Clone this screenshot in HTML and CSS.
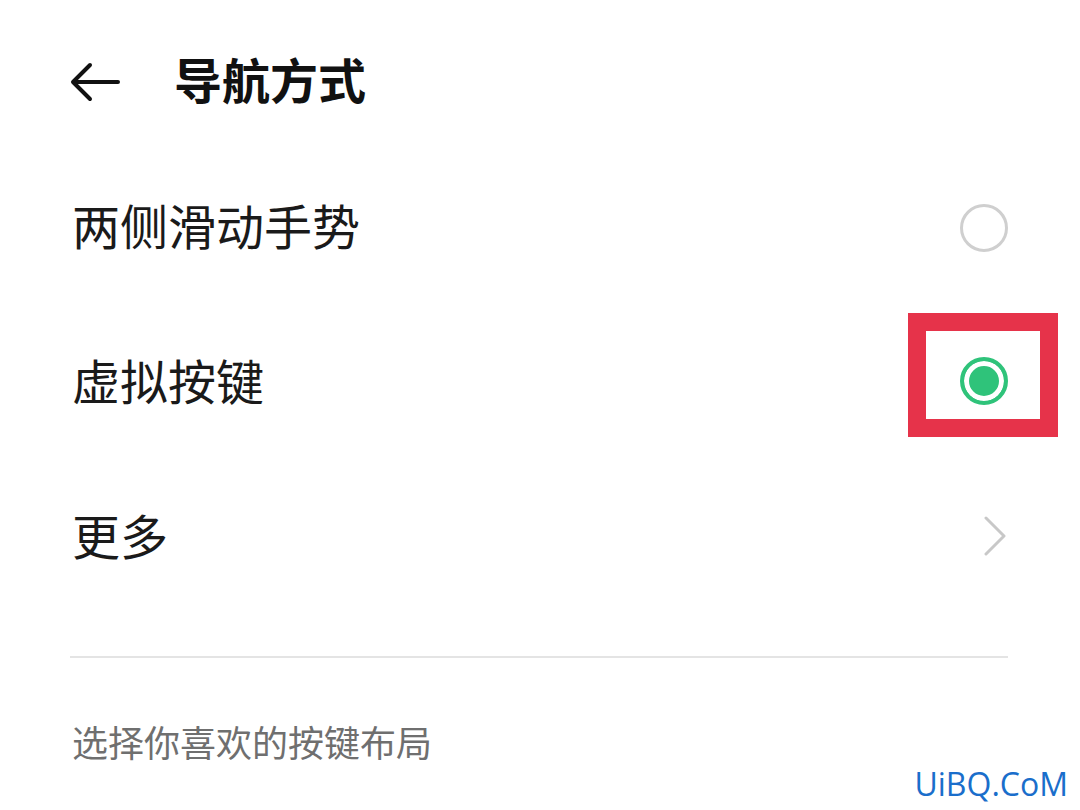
FILE: index.html
```html
<!DOCTYPE html>
<html lang="zh-CN">
<head>
    <meta charset="UTF-8">
    <meta name="viewport" content="width=device-width, initial-scale=1.0">
    <title>导航方式</title>
    <link rel="stylesheet" href="styles.css">
</head>
<body>

    <div class="page">
        <div class="header">
            <svg class="back" width="50" height="40" viewBox="0 0 50 40">
                <path d="M48 20 H4 M20 3 L3 20 L20 37" fill="none" stroke="#111" stroke-width="4" stroke-linecap="round" stroke-linejoin="round"/>
            </svg>
            <h1>导航方式</h1>
        </div>

        <div class="row">
            <span class="label">两侧滑动手势</span>
            <span class="radio"></span>
        </div>

        <div class="row">
            <span class="label">虚拟按键</span>
            <span class="radio checked"></span>
            <div class="highlight"></div> <!-- red box around the selected option -->
        </div>

        <div class="row">
            <span class="label">更多</span>
            <svg class="chevron" width="24" height="40" viewBox="0 0 24 40">
                <path d="M3 2 L21 20 L3 38" fill="none" stroke="#c8c8c8" stroke-width="3" stroke-linecap="round" stroke-linejoin="round"/>
            </svg>
        </div>

        <div class="divider"></div>

        <p class="hint">选择你喜欢的按键布局</p>
    </div>

    <div class="watermark">UiBQ.CoM</div>

</body>
</html>
```

FILE: styles.css
```css
body {
    margin: 0;
    background-color: #ffffff;
    font-family: "Noto Sans CJK SC", "Noto Sans", sans-serif;
    color: #1a1a1a;
    width: 1080px;
    height: 810px;
    overflow: hidden;
    position: relative;
}

.page {
    padding: 0 72px 0 72px;
}

.header {
    height: 150px;
    box-sizing: border-box;
    padding-top: 14px;
    display: flex;
    align-items: center;
    margin-left: -2px;
}

.back {
    display: block;
}

h1 {
    margin: 0 0 8px 54px;
    font-size: 48px;
    font-weight: 700;
    line-height: 1;
    color: #111;
}

.row {
    height: 155px;
    display: flex;
    align-items: center;
    justify-content: space-between;
    position: relative;
}

.label {
    font-size: 48px;
    line-height: 1;
    margin-bottom: 8px;
    color: #1a1a1a;
}

.radio {
    width: 48px;
    height: 48px;
    box-sizing: border-box;
    border: 3px solid #cfcfcf;
    border-radius: 50%;
}

.radio.checked {
    border: 4px solid #2fc37a;
    background-color: #2fc37a;
    box-shadow: inset 0 0 0 5px #ffffff;
    margin-top: -4px;
}

.highlight {
    position: absolute;
    top: 8px;
    right: -50px;
    width: 150px;
    height: 124px;
    box-sizing: border-box;
    border: 18px solid #e6334a;
}

.chevron {
    display: block;
    margin-top: -3px;
    margin-right: 1px;
}

.divider {
    margin: 41px 0 0 -2px;
    height: 2px;
    background-color: #e4e4e4;
}

.hint {
    margin: 58px 0 0;
    font-size: 36px;
    line-height: 50px;
    color: #6f6f6f;
}

.watermark {
    position: absolute;
    right: 12px;
    bottom: 5px;
    font-family: "Open Sans", sans-serif;
    font-size: 32px;
    color: #1a6ecb;
}
```
